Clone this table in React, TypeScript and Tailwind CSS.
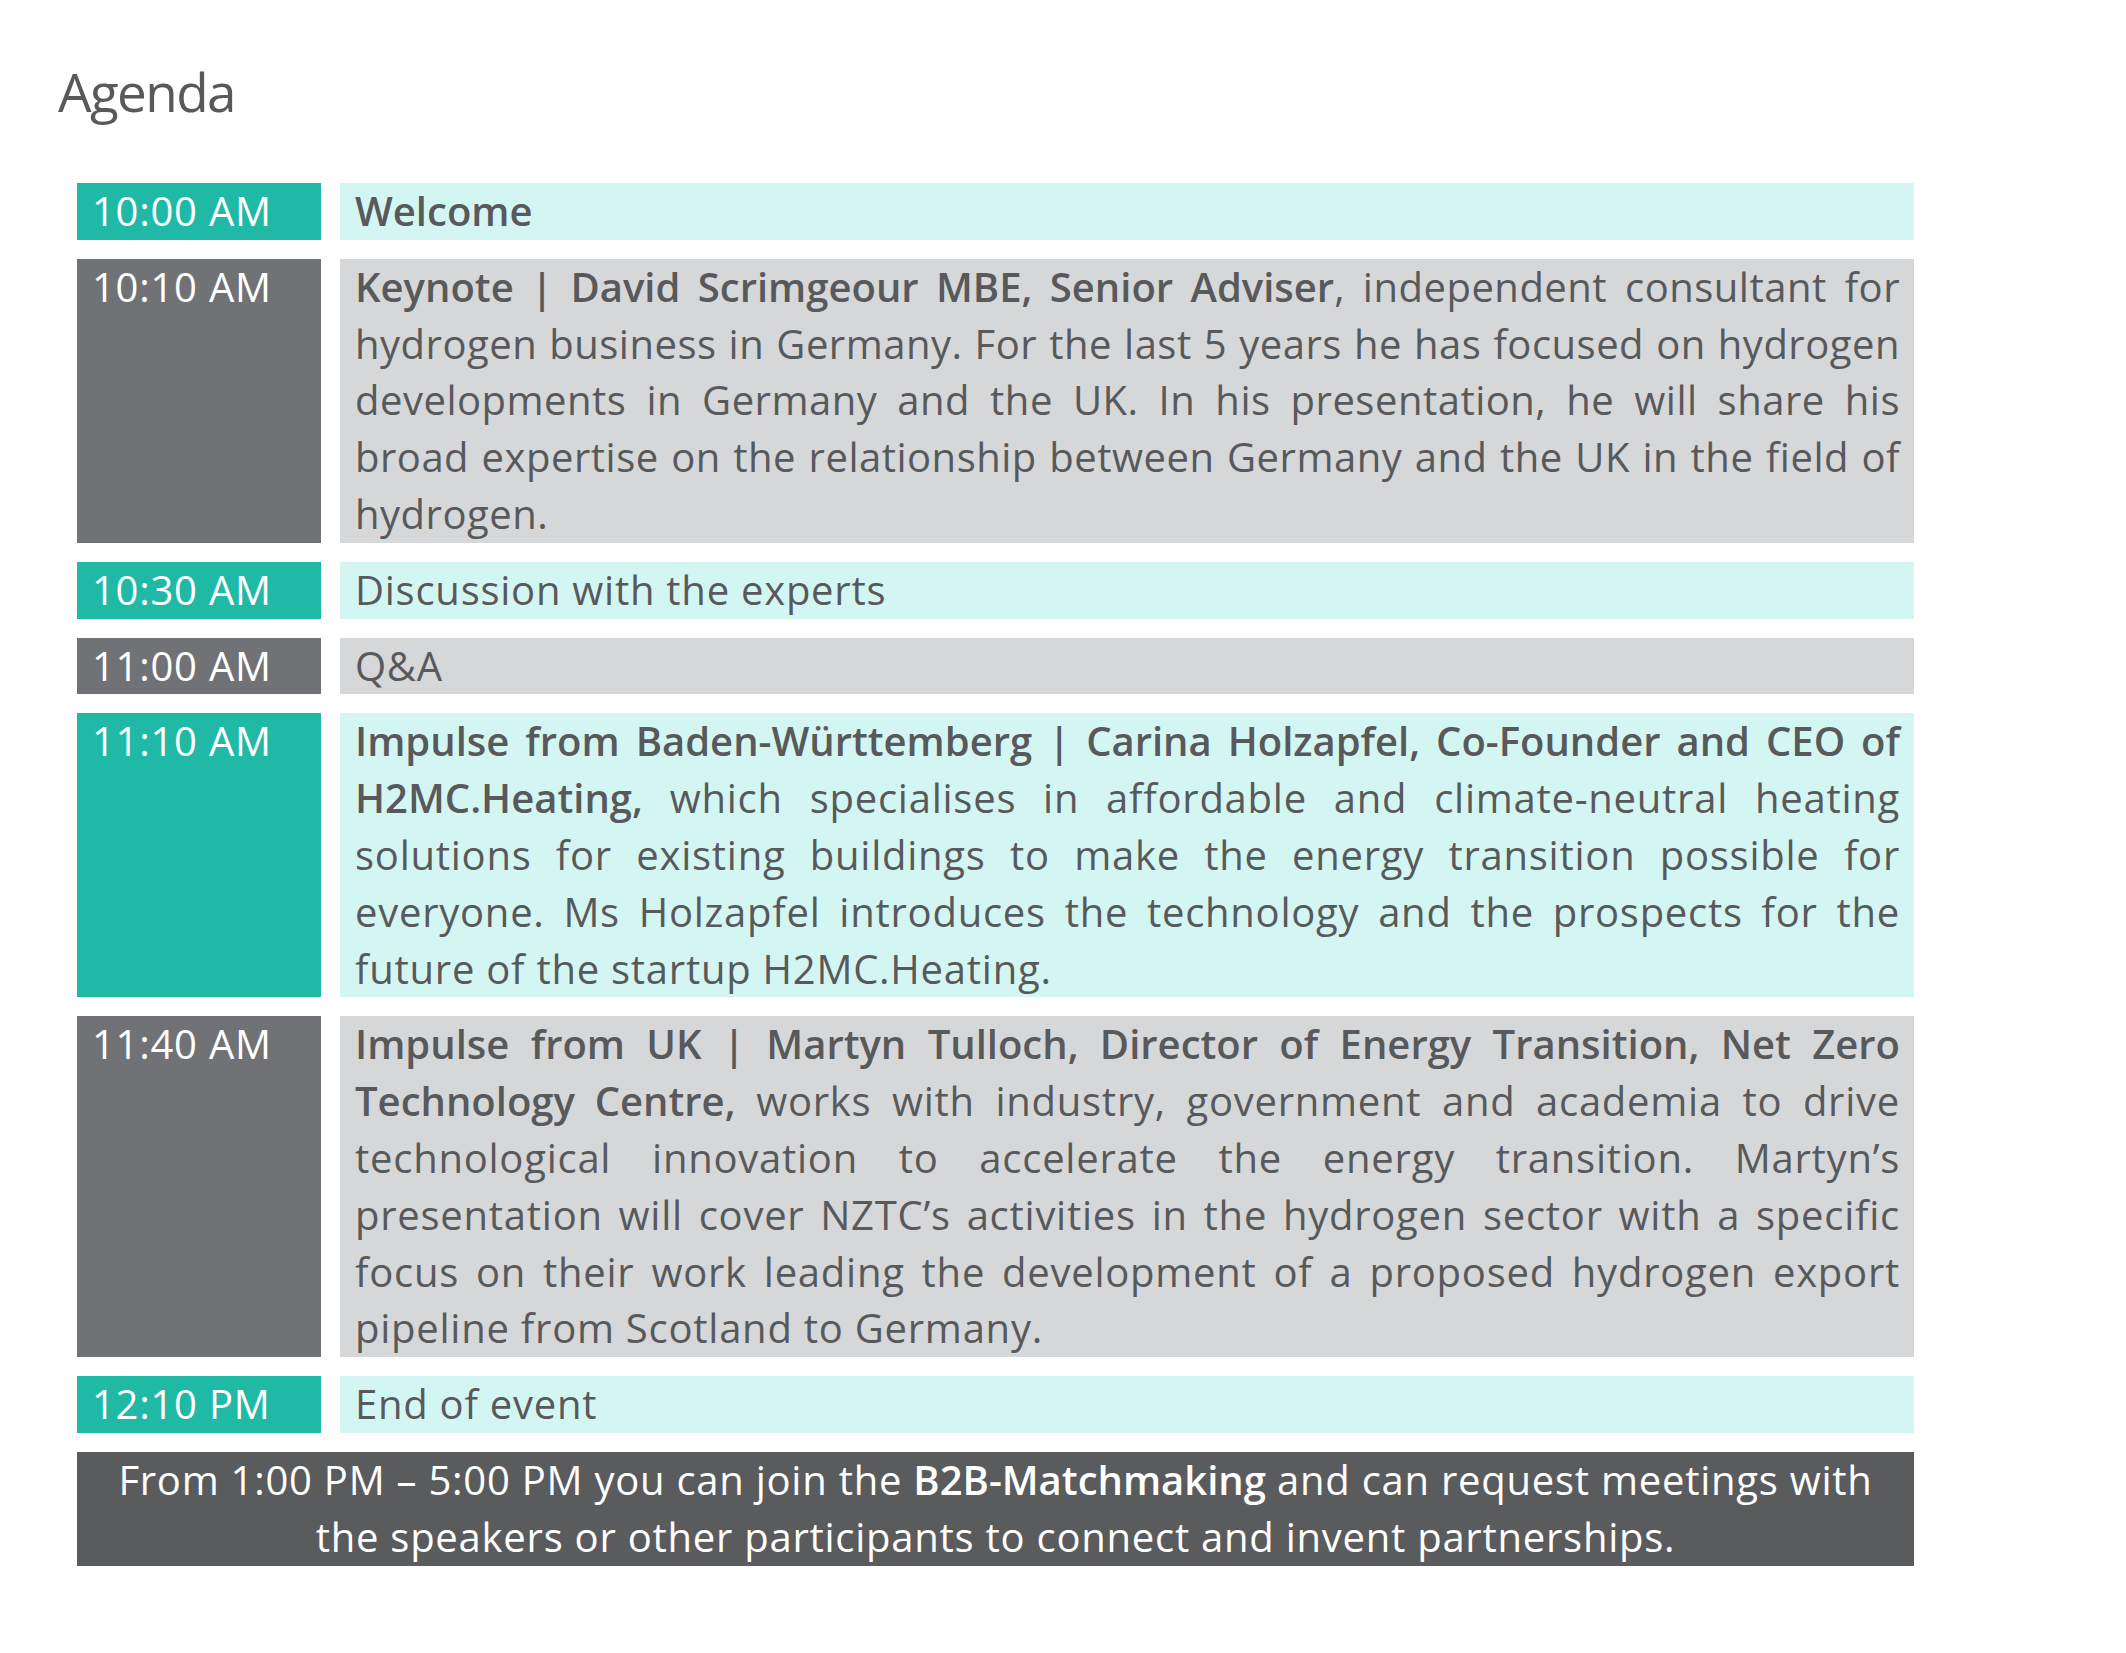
import React from "react"

type Item = {
  time: string
  tone: "teal" | "gray"
  tight?: boolean
  body: React.ReactNode
}

const B = ({ children }: { children: React.ReactNode }) => (
  <span className="font-semibold tracking-normal">{children}</span>
)

const items: Item[] = [
  { time: "10:00 AM", tone: "teal", body: <B>Welcome</B> },
  {
    time: "10:10 AM",
    tone: "gray",
    tight: true,
    body: (
      <>
        <B>Keynote | David Scrimgeour MBE, Senior Adviser</B>, independent consultant for hydrogen business in
        Germany. For the last 5 years he has focused on hydrogen developments in Germany and the UK. In his
        presentation, he will share his broad expertise on the relationship between Germany and the UK in the
        field of hydrogen.
      </>
    ),
  },
  { time: "10:30 AM", tone: "teal", body: "Discussion with the experts" },
  { time: "11:00 AM", tone: "gray", body: "Q&A" },
  {
    time: "11:10 AM",
    tone: "teal",
    body: (
      <>
        <B>Impulse from Baden-Württemberg | Carina Holzapfel, Co-Founder and CEO of H2MC.Heating,</B> which
        specialises in affordable and climate-neutral heating solutions for existing buildings to make the energy
        transition possible for everyone. Ms Holzapfel introduces the technology and the prospects for the future
        of the startup H2MC.Heating.
      </>
    ),
  },
  {
    time: "11:40 AM",
    tone: "gray",
    body: (
      <>
        <B>Impulse from UK | Martyn Tulloch, Director of Energy Transition, Net Zero Technology Centre,</B> works
        with industry, government and academia to drive technological innovation to accelerate the energy
        transition. Martyn’s presentation will cover NZTC’s activities in the hydrogen sector with a specific
        focus on their work leading the development of a proposed hydrogen export pipeline from Scotland to
        Germany.
      </>
    ),
  },
  { time: "12:10 PM", tone: "teal", body: "End of event" },
]

function AgendaRow({ item }: { item: Item }) {
  const teal = item.tone === "teal"
  return (
    <div className="flex gap-[19px]">
      <div
        className={
          teal
            ? "w-[244px] shrink-0 bg-[#1fb9a6] px-[15px] text-white"
            : "w-[244px] shrink-0 bg-[#717276] px-[15px] text-white"
        }
      >
        {item.time}
      </div>
      <div
        className={
          (teal ? "bg-[#d4f6f2] " : "bg-[#d6d7d9] ") +
          (item.tight ? "tracking-[0.5px] " : "") +
          "w-[1574px] pl-[15px] pr-[14px] text-justify text-[#58595b]"
        }
      >
        {item.body}
      </div>
    </div>
  )
}

export default function App() {
  return (
    <div className="min-h-screen bg-white font-['Open_Sans',sans-serif]">
      <div className="pl-[58px] pt-[56px]">
        <h1 className="text-[53px] font-medium leading-[72px] tracking-[-1.6px] text-[#58595b]">Agenda</h1>
      </div>
      <div className="mt-[55px] ml-[77px] flex w-[1837px] flex-col gap-[19px] text-[40px] leading-[56.8px] tracking-[0.75px]">
        {items.map((item) => (
          <AgendaRow key={item.time} item={item} />
        ))}
        <div className="bg-[#5a5b5d] px-6 text-center text-white">
          From 1:00 PM – 5:00 PM you can join the <B>B2B-Matchmaking</B> and can request meetings with the
          speakers or other participants to connect and invent partnerships.
        </div>
      </div>
    </div>
  )
}
